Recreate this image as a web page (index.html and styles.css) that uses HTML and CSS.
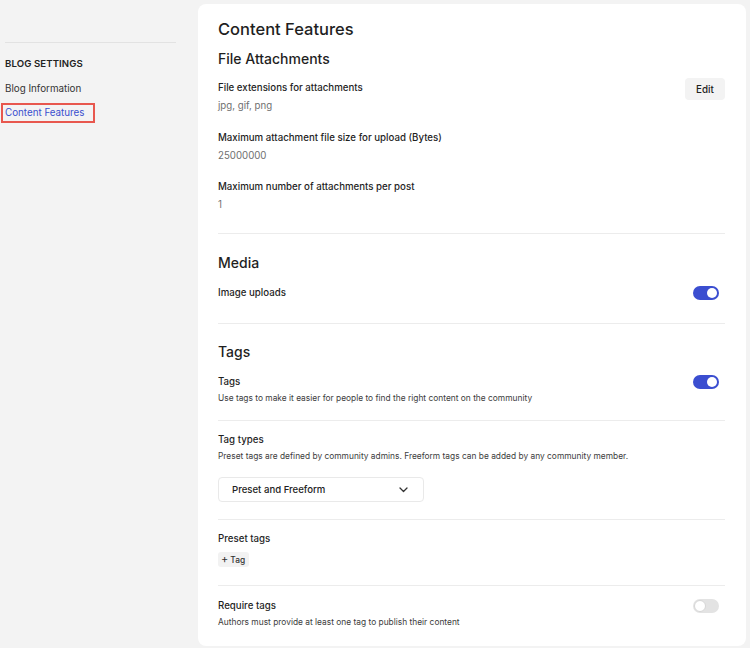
FILE: index.html
```html
<!DOCTYPE html>
<html lang="en">
<head>
<meta charset="utf-8">
<title>Content Features</title>
<link rel="stylesheet" href="styles.css">
</head>
<body>
<div class="layout">
  <aside class="sidebar">
    <div class="side-divider"></div>
    <div class="side-heading">BLOG SETTINGS</div>
    <a class="side-link">Blog Information</a>
    <a class="side-link active">Content Features</a>
  </aside>
  <main class="card">
    <h1 class="title">Content Features</h1>

    <section class="section files">
      <h2 class="heading">File Attachments</h2>
      <div class="row first">
        <div class="row-text">
          <div class="label">File extensions for attachments</div>
          <div class="value">jpg, gif, png</div>
        </div>
        <button class="edit-btn">Edit</button>
      </div>
      <div class="row second">
        <div class="row-text">
          <div class="label">Maximum attachment file size for upload (Bytes)</div>
          <div class="value">25000000</div>
        </div>
      </div>
      <div class="row">
        <div class="row-text">
          <div class="label">Maximum number of attachments per post</div>
          <div class="value">1</div>
        </div>
      </div>
    </section>

    <section class="section media">
      <h2 class="heading">Media</h2>
      <div class="row toggle-row">
        <div class="label">Image uploads</div>
        <span class="toggle on"><span class="knob"></span></span>
      </div>
    </section>

    <section class="section tags">
      <h2 class="heading">Tags</h2>
      <div class="sub first">
        <div class="row-text">
          <div class="label">Tags</div>
          <div class="desc">Use tags to make it easier for people to find the right content on the community</div>
        </div>
        <span class="toggle on"><span class="knob"></span></span>
      </div>
      <div class="sub types">
        <div class="row-text">
          <div class="label">Tag types</div>
          <div class="desc">Preset tags are defined by community admins. Freeform tags can be added by any community member.</div>
          <div class="select">
            <span>Preset and Freeform</span>
            <svg class="chev" width="9" height="6" viewBox="0 0 9 6"><path d="M1 1l3.5 3.5L8 1" fill="none" stroke="#333" stroke-width="1.3" stroke-linecap="round" stroke-linejoin="round"/></svg>
          </div>
        </div>
      </div>
      <div class="sub preset">
        <div class="row-text">
          <div class="label">Preset tags</div>
          <button class="tag-btn"><span class="plus">+</span> Tag</button>
        </div>
      </div>
      <div class="sub require">
        <div class="row-text">
          <div class="label">Require tags</div>
          <div class="desc">Authors must provide at least one tag to publish their content</div>
        </div>
        <span class="toggle off"><span class="knob"></span></span>
      </div>
    </section>
  </main>
</div>
</body>
</html>
```

FILE: styles.css
```css
* { box-sizing: border-box; }
html, body { margin: 0; padding: 0; }
body {
  background: #f3f3f3;
  font-family: Inter, "Noto Sans", "Liberation Sans", sans-serif;
  color: #222;
  width: 750px;
  height: 648px;
  overflow: hidden;
}
.layout {
  display: flex;
  align-items: flex-start;
  padding: 4px 4px 2px 5px;
  gap: 22px;
}
.sidebar {
  width: 171px;
  flex: none;
  display: flex;
  flex-direction: column;
  align-items: flex-start;
  padding-top: 38px;
}
.side-divider {
  width: 100%;
  height: 1px;
  background: #e2e2e2;
}
.side-heading {
  margin-top: 13px;
  font-size: 9.6px;
  font-weight: 600;
  line-height: 16px;
  color: #222;
  letter-spacing: 0.1px;
}
.side-link {
  font-size: 9.8px;
  line-height: 16px;
  color: #333;
  margin-top: 9px;
}
.side-link.active {
  color: #3a4fcf;
  border: 2px solid #e8574e;
  padding: 0 8px 0 2px;
  margin-left: -4px;
  line-height: 16px;
  margin-top: 6px;
}
.card {
  width: 548px;
  flex: none;
  background: #fff;
  border-radius: 8px;
  padding: 11px 21px 17px 20px;
}
.title {
  margin: 0;
  font-size: 16.5px;
  font-weight: 500;
  line-height: 28px;
  color: #1f1f1f;
}
.heading {
  margin: 0;
  font-size: 14px;
  font-weight: 500;
  line-height: 22px;
  color: #1f1f1f;
}
.section {
  border-bottom: 1px solid #ececec;
}
.section.files { padding-top: 5px; padding-bottom: 19px; }
.section.media { padding-top: 18px; padding-bottom: 21px; }
.section.tags { padding-top: 17px; border-bottom: none; }
.row {
  display: flex;
  justify-content: space-between;
  align-items: flex-start;
  margin-top: 13px;
}
.row.first { margin-top: 9px; }
.row.second { margin-top: 14px; }
.row.first .edit-btn { margin-top: -1px; }
.row.toggle-row { margin-top: 10px; align-items: center; }
.row-text { display: flex; flex-direction: column; align-items: flex-start; }
.label {
  font-size: 9.7px;
  font-weight: 500;
  line-height: 18px;
  color: #1f1f1f;
}
.value {
  font-size: 9.7px;
  line-height: 18px;
  color: #6f6f6f;
}
.desc {
  font-size: 8.4px;
  line-height: 14px;
  color: #3d3d3d;
}
.edit-btn {
  font-family: inherit;
  border: none;
  background: #f3f3f3;
  border-radius: 4px;
  width: 40px;
  height: 22px;
  padding: 0;
  font-size: 9.8px;
  font-weight: 500;
  color: #222;
}
.toggle {
  position: relative;
  width: 26px;
  height: 14px;
  border-radius: 7px;
  margin-right: 6px;
  flex: none;
}
.toggle.on { background: #3b4ed0; }
.toggle.off { background: #e3e3e3; }
.knob {
  position: absolute;
  top: 2px;
  width: 10px;
  height: 10px;
  border-radius: 50%;
  background: #fff;
}
.toggle.on .knob { right: 2px; }
.toggle.off .knob { left: 1px; top: 1px; width: 12px; height: 12px; border: 1px solid #d6d6d6; }
.sub {
  display: flex;
  justify-content: space-between;
  align-items: flex-start;
  border-top: 1px solid #ececec;
}
.sub .toggle { margin-top: 2px; }
.sub.first { border-top: none; padding-top: 10px; padding-bottom: 15px; }
.sub.types { padding-top: 10px; padding-bottom: 17px; }
.sub.preset { padding-top: 10px; padding-bottom: 18px; }
.sub.require { padding-top: 11px; padding-bottom: 0; }
.select {
  margin-top: 14px;
  width: 206px;
  height: 25px;
  border: 1px solid #e9e9e9;
  border-radius: 4px;
  display: flex;
  align-items: center;
  justify-content: space-between;
  padding: 0 15px 0 13px;
  font-size: 9.6px;
  font-weight: 500;
  color: #222;
}
.chev { display: block; }
.tag-btn {
  margin-top: 4px;
  font-family: inherit;
  border: none;
  background: #f2f2f2;
  border-radius: 3px;
  height: 15px;
  padding: 0 4px 0 3px;
  font-size: 8.4px;
  font-weight: 500;
  color: #333;
  display: flex;
  align-items: center;
  gap: 2px;
}
.plus { font-size: 11px; font-weight: 400; line-height: 1; }
```
